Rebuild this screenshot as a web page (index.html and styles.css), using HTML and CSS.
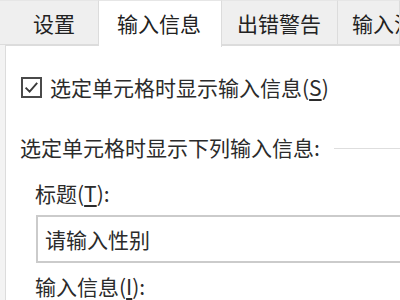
FILE: index.html
```html
<!DOCTYPE html>
<html lang="zh-CN">
<head>
    <meta charset="UTF-8">
    <title>数据验证</title>
    <link rel="stylesheet" href="styles.css">
</head>
<body>
    <div class="tabs">
        <div class="tab tab-settings">设置</div>
        <div class="tab tab-active">输入信息</div>
        <div class="tab tab-error">出错警告</div>
        <div class="tab tab-ime">输入法模式</div>
    </div>
    <div class="panel">
        <label class="check-row">
            <span class="checkbox">
                <svg viewBox="0 0 21 21">
                    <rect x="1" y="1" width="19" height="19" fill="#fff" stroke="#4a4a4a" stroke-width="2"/>
                    <path d="M4.6 10.6 L8.6 14.6 L16.2 5.8" fill="none" stroke="#3a3a3a" stroke-width="1.9"/>
                </svg>
            </span>
            <span>选定单元格时显示输入信息(<u>S</u>)</span>
        </label>
        <div class="section">
            <span class="section-title">选定单元格时显示下列输入信息:</span>
            <span class="section-line"></span>
        </div>
        <div class="field-label">标题(<u>T</u>):</div>
        <div class="text-box">请输入性别</div>
        <div class="field-label field-label-2">输入信息(<u>I</u>):</div>
    </div>
</body>
</html>
```

FILE: styles.css
```css
/* dialog page */
body {
    margin: 0;
    width: 400px;
    height: 300px;
    overflow: hidden;
    background-color: #f3f3f3;
    font-family: "Noto Sans CJK SC", "Noto Sans", sans-serif;
    color: #2b2b2b;
    font-size: 21px;
}

u {
    text-underline-offset: 3px;
}

.tabs {
    display: flex;
    height: 46px;
    position: relative;
    z-index: 1;
}

.tab {
    box-sizing: border-box;
    height: 45px;
    line-height: 44px;
    background-color: #efefef;
    border: 1px solid #dcdcdc;
    border-top-color: #e6e6e6;
    border-left: none;
    color: #222;
    white-space: nowrap;
}

.tab-settings {
    width: 99px;
    padding-left: 33px;
}

.tab-active {
    width: 123px;
    height: 47px;
    padding-left: 18px;
    background-color: #fff;
    border-bottom: none;
}

.tab-error {
    width: 116px;
    padding-left: 15px;
}

.tab-ime {
    flex: 1;
    padding-left: 14px;
    overflow: hidden;
}

.panel {
    margin-left: 5px;
    margin-top: -1px;
    height: 254px;
    overflow: hidden;
    background-color: #fff;
    border-left: 1px solid #dcdcdc;
    border-top: 1px solid #dcdcdc;
    padding-top: 29px;
}

.check-row {
    display: flex;
    align-items: center;
    height: 24px;
    line-height: 24px;
    padding-left: 15px;
}

.checkbox {
    flex-shrink: 0;
    width: 21px;
    height: 21px;
    margin-right: 8px;
}

.checkbox svg {
    display: block;
    width: 21px;
    height: 21px;
}

.section {
    display: flex;
    align-items: center;
    height: 24px;
    line-height: 24px;
    margin-top: 36px;
    padding-left: 14px;
}

.section-title {
    white-space: nowrap;
}

.section-line {
    flex: 1;
    height: 1px;
    margin-left: 14px;
    margin-top: 2px;
    background-color: #dedede;
}

.field-label {
    height: 24px;
    line-height: 24px;
    margin-top: 22px;
    padding-left: 29px;
}

.text-box {
    box-sizing: border-box;
    margin-top: 10px;
    margin-left: 30px;
    width: 400px;
    height: 48px;
    line-height: 44px;
    padding-left: 7px;
    border: 2px solid #cbcbcb;
    background-color: #fff;
}

.field-label-2 {
    margin-top: 11px;
}
```
